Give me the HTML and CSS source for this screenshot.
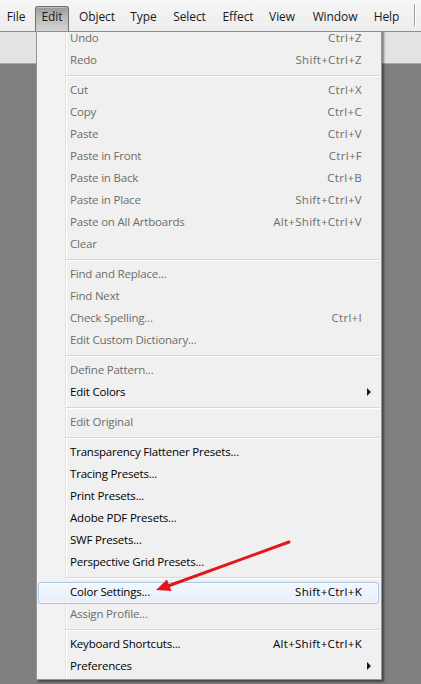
FILE: index.html
```html
<!DOCTYPE html>
<html>
<head>
<meta charset="utf-8">
<link rel="stylesheet" href="styles.css">
</head>
<body>
<div class="app">
  <div class="menubar">
    <span class="mb m-file">File</span>
    <span class="mb m-edit active">Edit</span>
    <span class="mb m-object">Object</span>
    <span class="mb m-type">Type</span>
    <span class="mb m-select">Select</span>
    <span class="mb m-effect">Effect</span>
    <span class="mb m-view">View</span>
    <span class="mb m-window">Window</span>
    <span class="mb m-help">Help</span>
    <span class="mb-sep"></span>
  </div>
  <div class="toolbar"></div>
  <div class="canvas"></div>

  <div class="dropdown">
    <div class="item dis"><span class="lbl">Undo</span><span class="sc">Ctrl+Z</span></div>
    <div class="item dis"><span class="lbl">Redo</span><span class="sc">Shift+Ctrl+Z</span></div>
    <div class="sep"></div>
    <div class="item dis"><span class="lbl">Cut</span><span class="sc">Ctrl+X</span></div>
    <div class="item dis"><span class="lbl">Copy</span><span class="sc">Ctrl+C</span></div>
    <div class="item dis"><span class="lbl">Paste</span><span class="sc">Ctrl+V</span></div>
    <div class="item dis"><span class="lbl">Paste in Front</span><span class="sc">Ctrl+F</span></div>
    <div class="item dis"><span class="lbl">Paste in Back</span><span class="sc">Ctrl+B</span></div>
    <div class="item dis"><span class="lbl">Paste in Place</span><span class="sc">Shift+Ctrl+V</span></div>
    <div class="item dis"><span class="lbl">Paste on All Artboards</span><span class="sc">Alt+Shift+Ctrl+V</span></div>
    <div class="item dis"><span class="lbl">Clear</span></div>
    <div class="sep"></div>
    <div class="item dis"><span class="lbl">Find and Replace...</span></div>
    <div class="item dis"><span class="lbl">Find Next</span></div>
    <div class="item dis"><span class="lbl">Check Spelling...</span><span class="sc">Ctrl+I</span></div>
    <div class="item dis"><span class="lbl">Edit Custom Dictionary...</span></div>
    <div class="sep"></div>
    <div class="item dis"><span class="lbl">Define Pattern...</span></div>
    <div class="item"><span class="lbl">Edit Colors</span><span class="arrow-r"></span></div>
    <div class="sep"></div>
    <div class="item dis"><span class="lbl">Edit Original</span></div>
    <div class="sep"></div>
    <div class="item"><span class="lbl">Transparency Flattener Presets...</span></div>
    <div class="item"><span class="lbl">Tracing Presets...</span></div>
    <div class="item"><span class="lbl">Print Presets...</span></div>
    <div class="item"><span class="lbl">Adobe PDF Presets...</span></div>
    <div class="item"><span class="lbl">SWF Presets...</span></div>
    <div class="item"><span class="lbl">Perspective Grid Presets...</span></div>
    <div class="sep"></div>
    <div class="item hl"><span class="lbl">Color Settings...</span><span class="sc">Shift+Ctrl+K</span></div>
    <div class="item dis"><span class="lbl">Assign Profile...</span></div>
    <div class="sep"></div>
    <div class="item"><span class="lbl">Keyboard Shortcuts...</span><span class="sc">Alt+Shift+Ctrl+K</span></div>
    <div class="item"><span class="lbl">Preferences</span><span class="arrow-r"></span></div>
  </div>

  <svg class="annot" width="421" height="684" viewBox="0 0 421 684">
    <line x1="289" y1="542" x2="168" y2="586" stroke="#e3161c" stroke-width="3" stroke-linecap="round"/>
    <polygon points="156,590 167,579.5 171.5,591" fill="#e3161c"/>
  </svg>
</div>
</body>
</html>
```
FILE: styles.css
```css
* { box-sizing: border-box; }
html, body { margin: 0; padding: 0; }
body {
  width: 421px;
  height: 684px;
  overflow: hidden;
  font-family: "Open Sans", "Noto Sans", sans-serif;
  font-size: 11.5px;
  letter-spacing: -0.2px;
  color: #000;
}
.app {
  position: relative;
  width: 421px;
  height: 684px;
  display: flex;
  flex-direction: column;
  background: #7f7f7f;
}
.menubar {
  position: relative;
  z-index: 2;
  height: 32px;
  flex: none;
  display: flex;
  align-items: flex-end;
  background: linear-gradient(#f6f6f6, #ececec);
  border-bottom: 1px solid #8c8c8c;
  font-size: 12px;
  letter-spacing: -0.1px;
}
.mb {
  height: 25px;
  line-height: 20px;
  text-align: center;
  color: #1a1a1a;
  border: 1px solid transparent;
  border-bottom: none;
}
.mb.active {
  border-color: #6e6e6e;
  border-radius: 3px 3px 0 0;
  background: linear-gradient(#969696, #b8b8b8 40%, #d4d4d4);
  box-shadow: inset 0 1px 0 #c0c0c0;
}
.m-file { width: 32px; margin-right: 3px; }
.m-edit { width: 34px; }
.m-object { width: 56px; }
.m-type { width: 37px; }
.m-select { width: 55px; }
.m-effect { width: 42px; }
.m-view { width: 46px; }
.m-window { width: 60px; }
.m-help { width: 43px; }
.mb-sep {
  width: 1px;
  height: 22px;
  margin: 0 0 5px 6px;
  background: #a0a0a0;
  box-shadow: 1px 0 0 #fff;
}
.toolbar {
  height: 32px;
  flex: none;
  background: #e3e3e3;
  border-bottom: 1px solid #a8a8a8;
}
.canvas {
  flex: 1;
  background: #7f7f7f;
}
.dropdown {
  position: absolute;
  z-index: 1;
  left: 36px;
  top: 27px;
  width: 346px;
  border: 1px solid #979797;
  background-color: #f0f0f0;
  background-image: linear-gradient(to right, #f2f2f2 0, #f2f2f2 28px, #e2e3e3 28px, #e2e3e3 29px, #ffffff 29px, #ffffff 30px, transparent 30px);
  box-shadow: 2px 2px 2px rgba(0, 0, 0, 0.45);
  padding: 0 0 1px 0;
}
.item {
  display: flex;
  align-items: center;
  height: 22px;
  line-height: 20px;
  padding: 0 19px 2px 33px;
  white-space: nowrap;
}
.item .lbl { flex: 1; }
.item .sc { text-align: right; letter-spacing: 0.3px; }
.item.dis { color: #6d6d6d; }
.item.hl {
  margin: 0 2px 0 1px;
  padding: 0 16px 2px 31px;
  line-height: 18px;
  border: 1px solid #a9c6e8;
  border-radius: 3px;
  background: linear-gradient(#f4f8fc, #e6eef8);
  box-shadow: inset 0 0 0 1px rgba(255, 255, 255, 0.6);
}
.arrow-r {
  width: 0;
  height: 0;
  border-top: 4px solid transparent;
  border-bottom: 4px solid transparent;
  border-left: 4px solid #1a1a1a;
  margin-right: -9px;
}
.sep {
  height: 2px;
  margin: 3px 1px 3px 29px;
  border-top: 1px solid #d7d7d7;
  border-bottom: 1px solid #ffffff;
}
.annot {
  position: absolute;
  left: 0;
  top: 0;
  z-index: 3;
  pointer-events: none;
}
```
